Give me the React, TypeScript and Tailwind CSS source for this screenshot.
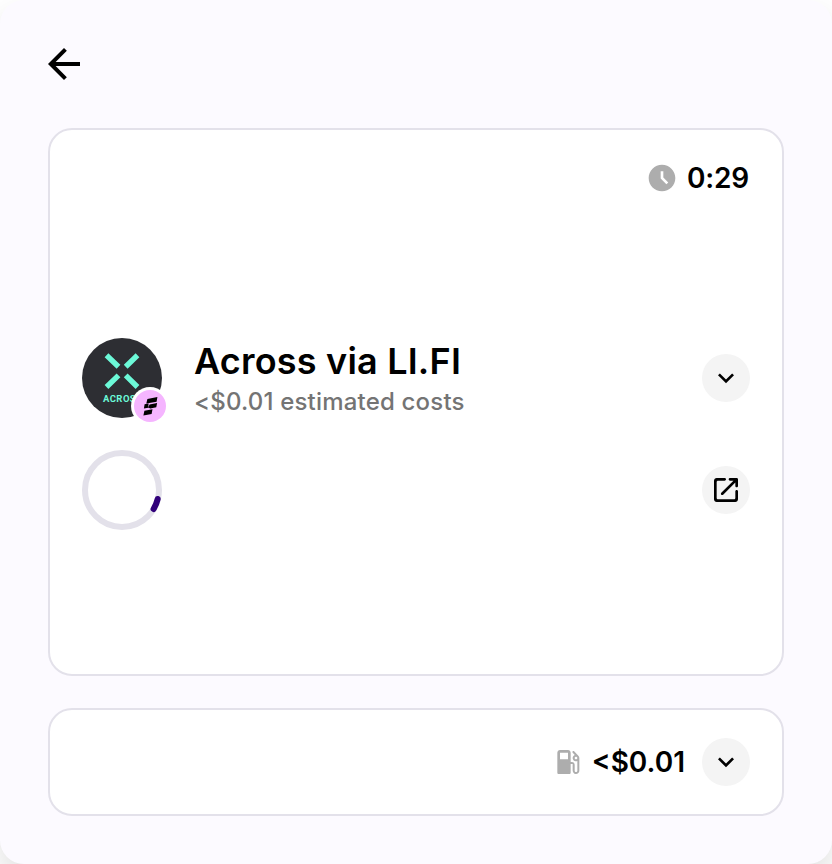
import type { ReactNode } from "react";

function Icon({ d, className }: { d: string; className: string }) {
  return (
    <svg viewBox="0 0 24 24" fill="currentColor" className={`shrink-0 ${className}`} aria-hidden="true">
      <path d={d} />
    </svg>
  );
}

const ARROW_BACK = "M20 11H7.83l5.59-5.59L12 4l-8 8 8 8 1.41-1.41L7.83 13H20z";
const CLOCK =
  "M11.99 2C6.47 2 2 6.48 2 12s4.47 10 9.99 10C17.52 22 22 17.52 22 12S17.52 2 11.99 2m3.3 14.71L11 12.41V7h2v4.59l3.71 3.71z";
const EXPAND_MORE = "M16.59 8.59 12 13.17 7.41 8.59 6 10l6 6 6-6z";
const OPEN_IN_NEW =
  "M18 19H6c-.55 0-1-.45-1-1V6c0-.55.45-1 1-1h5c.55 0 1-.45 1-1s-.45-1-1-1H5c-1.11 0-2 .9-2 2v14c0 1.1.9 2 2 2h14c1.1 0 2-.9 2-2v-6c0-.55-.45-1-1-1s-1 .45-1 1v5c0 .55-.45 1-1 1M14 4c0 .55.45 1 1 1h2.59l-9.13 9.13c-.39.39-.39 1.02 0 1.41s1.02.39 1.41 0L19 6.41V9c0 .55.45 1 1 1s1-.45 1-1V4c0-.55-.45-1-1-1h-5c-.55 0-1 .45-1 1";
const GAS =
  "m19.77 7.23.01-.01-3.19-3.19c-.29-.29-.77-.29-1.06 0s-.29.77 0 1.06l1.58 1.58c-1.05.4-1.76 1.47-1.58 2.71.15 1.1 1.1 2 2.21 2.11.47.05.88-.03 1.27-.2v7.21c0 .55-.45 1-1 1s-1-.45-1-1V14c0-1.1-.9-2-2-2h-1V5c0-1.1-.9-2-2-2H6c-1.1 0-2 .9-2 2v15c0 .55.45 1 1 1h8c.55 0 1-.45 1-1v-6.5h1.5v4.86c0 1.31.94 2.5 2.24 2.63 1.5.15 2.76-1.02 2.76-2.49V9c0-.69-.28-1.32-.73-1.77M12 10H6V5h6zm6 0c-.55 0-1-.45-1-1s.45-1 1-1 1 .45 1 1-.45 1-1 1";

function RoundButton({ label, d }: { label: string; d: string }) {
  return (
    <button aria-label={label} className="flex size-12 shrink-0 items-center justify-center rounded-full bg-[#f4f4f4]">
      <Icon d={d} className="size-8" />
    </button>
  );
}

function Card({ className, children }: { className: string; children: ReactNode }) {
  return <section className={`rounded-3xl border-2 border-[#e3e1ea] bg-white px-8 ${className}`}>{children}</section>;
}

function ToolAvatar() {
  return (
    <div className="relative size-20 shrink-0">
      <svg viewBox="0 0 80 80" className="size-20">
        <circle cx="40" cy="40" r="40" fill="#2d2e33" />
        <g stroke="#6cf9d8" strokeWidth="5.4">
          <path d="M24.5 17.3 36.5 28.7M55.5 17.3 43.7 28.7M24.5 49 36.5 37.4M55.5 49 43.7 37.4" />
        </g>
        <text
          x="40.5"
          y="64.3"
          textAnchor="middle"
          fill="#6cf9d8"
          className="font-['Roboto',sans-serif] text-[9.5px] font-bold"
          textLength="39"
        >
          ACROSS
        </text>
      </svg>
      <svg viewBox="0 0 38 38" className="absolute top-[49px] left-[49px] size-[38px]">
        <circle cx="19" cy="19" r="19" fill="#fff" />
        <circle cx="19" cy="19" r="16" fill="#f5b5ff" />
        <path
          d="M16.4 12 26.4 10.1 25.6 14.8 15.3 16.6ZM13.6 17.3 17.6 16.6 17.2 20.8 12.9 21.6ZM18.6 17.6 26.1 16 25.3 20.2 19.4 21.4 17.2 20.4ZM13.4 23.8 21.5 22.2 20.6 26.9 12.4 28.4Z"
          fill="#000"
        />
      </svg>
    </div>
  );
}

function Spinner() {
  return (
    <svg viewBox="0 0 80 80" fill="none" strokeWidth="6" className="size-20 shrink-0">
      <circle cx="40" cy="40" r="37" stroke="#e3e1ea" />
      <path d="M75.7 49A37 37 0 0 1 71.6 59" stroke="#31007a" strokeLinecap="round" />
    </svg>
  );
}

export default function App() {
  return (
    <div className="h-[864px] w-[832px] overflow-hidden bg-white font-['Inter',sans-serif] text-black">
      <main className="flex h-full flex-col rounded-3xl bg-[#fcfaff] px-12 pb-12 shadow-[0_16px_32px_rgba(0,0,0,0.12)]">
        <header className="flex h-32 items-center">
          <button aria-label="Back" className="-ml-2">
            <Icon d={ARROW_BACK} className="size-12" />
          </button>
        </header>

        <Card className="flex h-[548px] flex-col">
          <div className="mt-8 flex h-8 items-center justify-end gap-[9px] pr-px">
            <Icon d={CLOCK} className="size-8 text-[#adadad]" />
            <span className="text-[28px] leading-8 font-semibold tracking-[-0.2px]">0:29</span>
          </div>
          <div className="mt-36 flex h-20 items-center">
            <ToolAvatar />
            <div className="ml-8 h-full flex-1 pt-px">
              <h1 className="text-[36px] leading-[44px] font-semibold tracking-[0.2px]">Across via LI.FI</h1>
              <p className="text-[24px] leading-[37px] font-medium tracking-[0.19px] text-[#747474]">
                &lt;$0.01 estimated costs
              </p>
            </div>
            <RoundButton label="Show details" d={EXPAND_MORE} />
          </div>
          <div className="mt-8 flex h-20 items-center justify-between">
            <Spinner />
            <RoundButton label="Open transaction" d={OPEN_IN_NEW} />
          </div>
        </Card>

        <Card className="mt-8 flex h-[108px] items-center justify-end">
          <Icon d={GAS} className="size-8 text-[#adadad]" />
          <span className="mr-[17px] ml-2 text-[28px] leading-8 font-semibold">&lt;$0.01</span>
          <RoundButton label="Show fees" d={EXPAND_MORE} />
        </Card>
      </main>
    </div>
  );
}
